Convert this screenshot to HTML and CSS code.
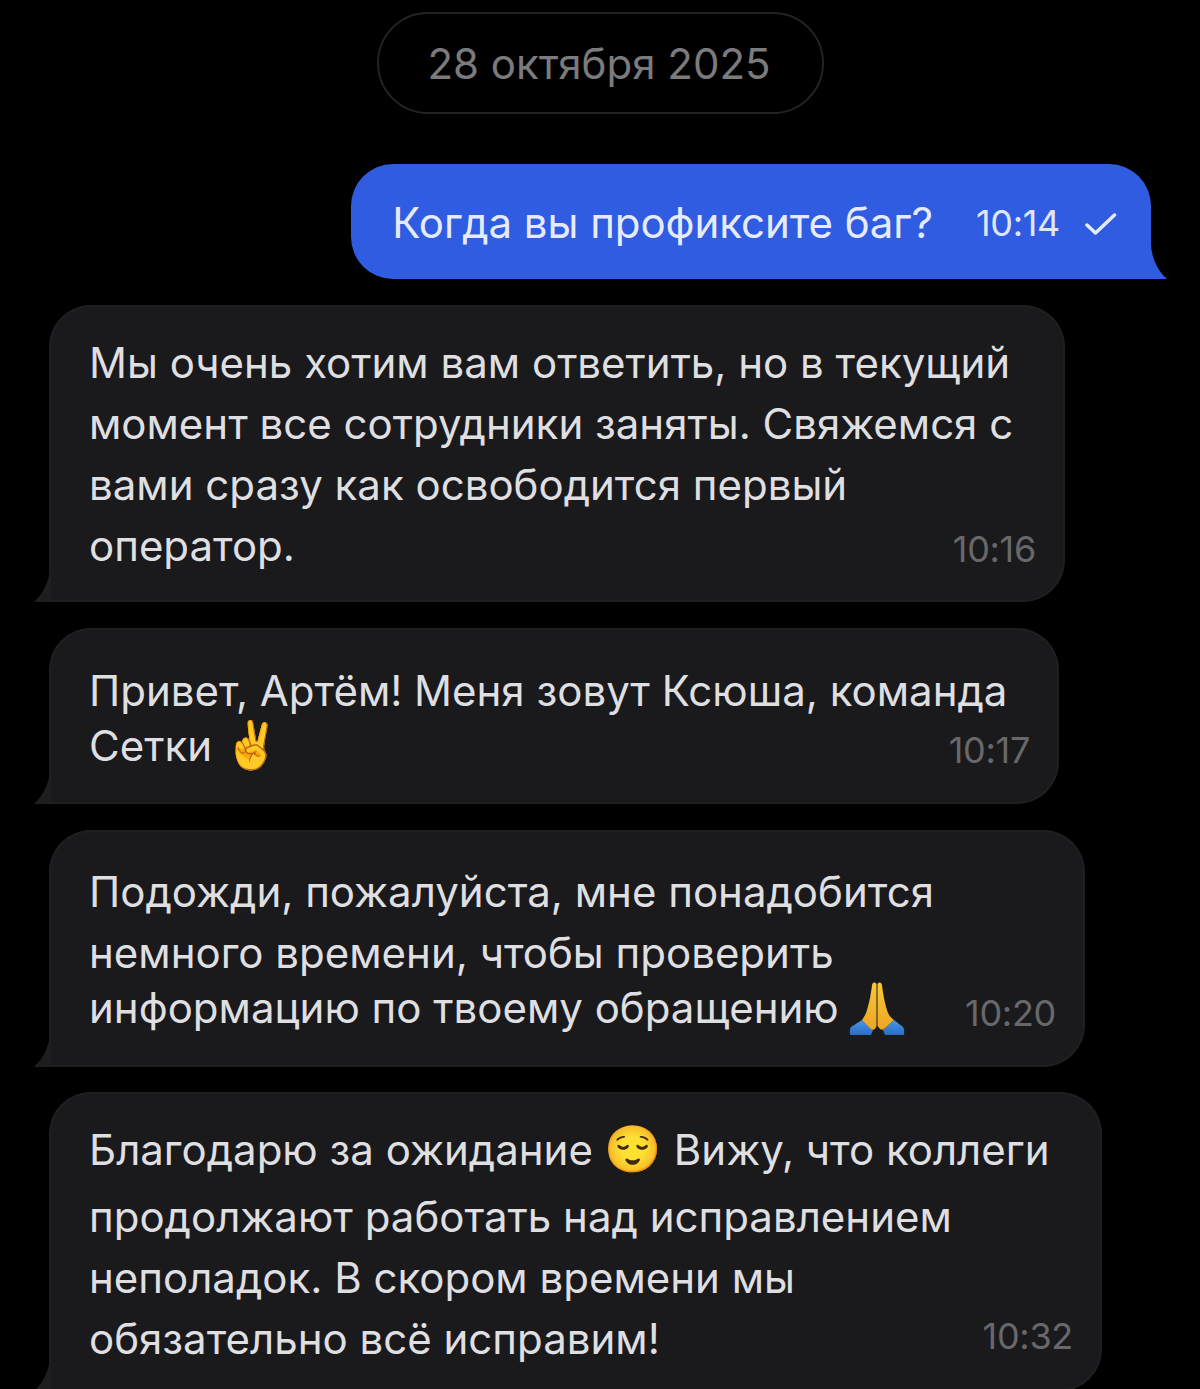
FILE: index.html
```html
<!DOCTYPE html>
<html lang="ru">
<head>
    <meta charset="UTF-8">
    <title>Чат</title>
    <link rel="stylesheet" href="styles.css">
</head>
<body>
    <div class="chat">
        <div class="date">28 октября 2025</div>
        <div class="msg msg-out">
            <span class="out-text">Когда вы профиксите баг?</span>
            <span class="time">10:14</span>
            <svg class="check" viewBox="0 0 32 24" width="32" height="24"><path d="M2 13l8.500 8L29.500 3" fill="none" stroke="#e6ebfb" stroke-width="3.500" stroke-linecap="round" stroke-linejoin="round"/></svg>
        </div>
        <div class="msg msg-in m1">
            <div class="text">
                <span class="line">Мы очень хотим вам ответить, но в текущий</span>
                <span class="line">момент все сотрудники заняты. Свяжемся с</span>
                <span class="line">вами сразу как освободится первый</span>
                <span class="line">оператор.</span>
            </div>
            <span class="time">10:16</span>
        </div>
        <div class="msg msg-in m2">
            <div class="text">
                <span class="line">Привет, Артём! Меня зовут Ксюша, команда</span>
                <span class="line tight">Сетки <span class="emoji">✌️</span></span>
            </div>
            <span class="time">10:17</span>
        </div>
        <div class="msg msg-in m3">
            <div class="text">
                <span class="line">Подожди, пожалуйста, мне понадобится</span>
                <span class="line">немного времени, чтобы проверить</span>
                <span class="line tight">информацию по твоему обращению
                    <svg class="pray" viewBox="0 0 56 54" width="56" height="54" role="img" aria-label="🙏">
                        <defs>
                            <linearGradient id="palm" x1="0" y1="0" x2="0" y2="1">
                                <stop offset="0" stop-color="#f8c835"/>
                                <stop offset="1" stop-color="#eda526"/>
                            </linearGradient>
                            <linearGradient id="sleeve" x1="0" y1="0" x2="0" y2="1">
                                <stop offset="0" stop-color="#4a97e6"/>
                                <stop offset="1" stop-color="#2a6cc4"/>
                            </linearGradient>
                        </defs>
                        <path d="M1 53C0.500 49 1 46 2 45L13 38L24 48L22 53Z" fill="url(#sleeve)"/>
                        <path d="M55 53C55.500 49 55 46 54 45L45 38L34 48L36 53Z" fill="url(#sleeve)"/>
                        <path d="M27.500 44L27.500 2C26 0 24 0 23 3C22 12 20 22 18 28C17 32 15 35 13 38L22 47C23 48 25 48 26 47Z" fill="url(#palm)"/>
                        <path d="M28.500 44L28.500 2C30 0 32 0 33 3C34 12 36 22 38 28C39 32 41 35 45 38L35 47C34 48 32 48 31 47Z" fill="url(#palm)"/>
                    </svg>
                </span>
            </div>
            <span class="time">10:20</span>
        </div>
        <div class="msg msg-in m4">
            <div class="text">
                <span class="line">Благодарю за ожидание <span class="emoji">😌</span> Вижу, что коллеги</span>
                <span class="line wide">продолжают работать над исправлением</span>
                <span class="line">неполадок. В скором времени мы</span>
                <span class="line">обязательно всё исправим!</span>
            </div>
            <span class="time">10:32</span>
        </div>
    </div>
</body>
</html>
```

FILE: styles.css
```css
html, body {
    margin: 0;
    height: 1389px;
    overflow: hidden;
    background-color: #000;
}
.chat {
    display: flex;
    flex-direction: column;
    padding: 12px 49px 0;
    font-family: Inter, "Noto Sans", sans-serif;
    font-size: 42px;
    line-height: 61px;
    color: #dfdfe1;
}
.date {
    box-sizing: border-box;
    align-self: center;
    width: 447px;
    height: 102px;
    padding-right: 2px;
    line-height: 100px;
    text-align: center;
    border: 2px solid #232325;
    border-radius: 51px;
    color: #7b7b7d;
    margin-bottom: 50px;
}
.msg {
    position: relative;
    border-radius: 42px;
    margin-bottom: 26px;
}
.msg::after {
    content: "";
    position: absolute;
    bottom: 0;
    width: 16px;
    height: 34px;
}
.msg-out {
    align-self: flex-end;
    display: flex;
    align-items: center;
    height: 115px;
    padding: 0 34px 0 41px;
    background-color: #2f5ce0;
    color: #e6ebfb;
    border-bottom-right-radius: 0;
}
.msg-out::after {
    right: -16px;
    background-color: #2f5ce0;
    clip-path: path("M0 0C1 14 7 26 16 34L0 34Z");
}
.out-text {
    margin-top: 2px;
    letter-spacing: -0.05px;
}
.msg-out .time {
    margin: 4px 25px 0 43px;
    color: #e0e6fa;
}
.check {
    margin-top: 4px;
}
.msg-in {
    display: grid;
    background-color: #1a1a1c;
    box-shadow: inset 0 0 0 2px #1f1f21;
    padding: 28px 29px 24px 40px;
    border-bottom-left-radius: 0;
}
.msg-in::after {
    left: -15px;
    background-color: #1e1e20;
    clip-path: path("M16 0C15 14 9 26 0 34L16 34Z");
}
.msg-in .text, .msg-in .time {
    grid-area: 1 / 1;
}
.msg-in .time {
    justify-self: end;
    align-self: end;
    color: #68686b;
    line-height: 60px;
}
.time {
    font-size: 36px;
    letter-spacing: -0.3px;
}
.text {
    margin-bottom: 4px;
}
.line {
    display: block;
    height: 61px;
    white-space: nowrap;
}
.tight {
    margin-top: -6px;
}
.wide {
    margin-top: 6px;
}
.emoji {
    font-family: "Noto Color Emoji", sans-serif;
    font-size: 46px;
    line-height: 0;
}
.pray {
    margin-left: -2px;
    vertical-align: -13px;
}
.m1 { width: 947px; padding-top: 27px; }
.m1 .text { margin-bottom: 2px; }
.m1 .time { margin-bottom: -1px; }
.m2 { width: 941px; padding-top: 32px; }
.m3 { width: 967px; padding-top: 31px; margin-bottom: 25px; }
.m3 .text { margin-bottom: 5px; }
.m4 { width: 984px; padding-top: 27px; padding-bottom: 22px; }
.m4 .text { margin-bottom: 0; }
.m4 .time { margin-bottom: 3px; }
```
